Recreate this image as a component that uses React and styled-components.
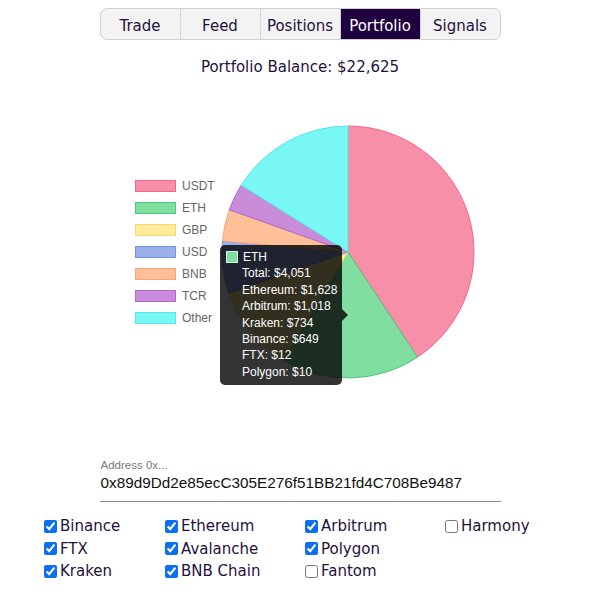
import styled, { createGlobalStyle } from "styled-components"

const GlobalStyle = createGlobalStyle`
  body {
    margin: 0;
    background: #fff;
    font-family: "DejaVu Sans", Verdana, sans-serif;
    color: #1f1140;
  }
`

const tabs = ["Trade", "Feed", "Positions", "Portfolio", "Signals"]

const slices = [
  { label: "USDT", value: 9210, fill: "#f88fa8", stroke: "#f3668a" },
  { label: "ETH", value: 4051, fill: "#80dea0", stroke: "#4fc47c" },
  { label: "GBP", value: 2514, fill: "#ffeb99", stroke: "#f5d870" },
  { label: "USD", value: 1508, fill: "#9aaeea", stroke: "#7a92e0" },
  { label: "BNB", value: 918, fill: "#ffbf99", stroke: "#f9a476" },
  { label: "TCR", value: 779, fill: "#c98cd9", stroke: "#b465cb" },
  { label: "Other", value: 3645, fill: "#79f7f5", stroke: "#52e9ea" },
]

const tooltipLines = [
  "Total: $4,051",
  "Ethereum: $1,628",
  "Arbitrum: $1,018",
  "Kraken: $734",
  "Binance: $649",
  "FTX: $12",
  "Polygon: $10",
]

const chains = [
  { name: "Binance", on: true },
  { name: "FTX", on: true },
  { name: "Kraken", on: true },
  { name: "Ethereum", on: true },
  { name: "Avalanche", on: true },
  { name: "BNB Chain", on: true },
  { name: "Arbitrum", on: true },
  { name: "Polygon", on: true },
  { name: "Fantom", on: false },
  { name: "Harmony", on: false },
]

const Page = styled.div`
  width: 600px;
  padding-top: 8px;
`

const TabBar = styled.div`
  display: flex;
  width: 401px;
  height: 32px;
  box-sizing: border-box;
  margin: 0 auto;
  border: 1px solid #cfcfcf;
  border-radius: 7px;
  overflow: hidden;
  background: #f3f3f3;
`

const Tab = styled.div`
  flex: 1;
  display: flex;
  align-items: center;
  justify-content: center;
  padding-top: 3px;
  font-size: 15px;
  background: ${p => (p.$active ? "#1f0040" : "transparent")};
  color: ${p => (p.$active ? "#fff" : "#1f1140")};
  border-left: ${p => (p.$first ? "none" : "1px solid #d4d4d4")};
`

const Balance = styled.div`
  margin-top: 18px;
  text-align: center;
  font-size: 15px;
  line-height: 18px;
`

const ChartWrap = styled.div`
  position: relative;
  height: 312px;
  margin-top: 20px;
  padding-left: 135px;
  display: flex;
  align-items: center;
`

const Legend = styled.div`
  width: 85px;
  display: flex;
  flex-direction: column;
`

const LegendItem = styled.div`
  display: flex;
  align-items: center;
  gap: 6px;
  height: 22px;
  font-family: "Liberation Sans", Arial, sans-serif;
  font-size: 12px;
  color: #666;
`

const Swatch = styled.span`
  width: 41px;
  height: 12px;
  box-sizing: border-box;
  background: ${p => p.$fill};
  border: 1px solid ${p => p.$stroke};
`

const Tooltip = styled.div`
  position: absolute;
  left: 220px;
  top: 149px;
  width: 122px;
  box-sizing: border-box;
  padding: 4px 6px 5px 6px;
  background: rgba(0, 0, 0, 0.8);
  border-radius: 5px;
  font-family: "Liberation Sans", Arial, sans-serif;
  font-size: 12px;
  line-height: 16.4px;
  color: #fff;
  white-space: nowrap;

  &::after {
    content: "";
    position: absolute;
    right: -6px;
    top: 50%;
    margin-top: -6px;
    border-style: solid;
    border-width: 6px 0 6px 6px;
    border-color: transparent transparent transparent rgba(0, 0, 0, 0.8);
  }
`

const TooltipTitle = styled.div`
  display: flex;
  align-items: center;
  gap: 5px;
`

const TooltipBox = styled.span`
  width: 12px;
  height: 12px;
  box-sizing: border-box;
  background: #80dea0;
  border: 1px solid #d8f5e2;
`

const TooltipLine = styled.div`
  padding-left: 16px;
`

const AddressField = styled.div`
  width: 401px;
  margin: 50px auto 0;
  font-family: "Liberation Sans", Arial, sans-serif;
`

const FieldLabel = styled.div`
  font-size: 11.5px;
  line-height: 14px;
  color: #7a7a7a;
  padding-left: 1px;
`

const FieldValue = styled.div`
  font-size: 15.3px;
  line-height: 20px;
  color: #111;
  padding: 1px 0 8px 1px;
  border-bottom: 1px solid #8a8a8a;
`

const ChainGrid = styled.div`
  display: grid;
  grid-template-columns: 121px 140px 140px auto;
  grid-template-rows: repeat(3, 22.5px);
  grid-auto-flow: column;
  margin-top: 13px;
  padding-left: 44px;
`

const ChainItem = styled.label`
  display: flex;
  align-items: center;
  font-size: 15px;
  color: #1f1140;

  input {
    width: 13px;
    height: 13px;
    margin: 0 3px 0 0;
    accent-color: #0b6ff0;
  }
`

const polar = (cx, cy, r, deg) => {
  const a = (deg * Math.PI) / 180
  return [cx + r * Math.cos(a), cy + r * Math.sin(a)]
}

const PieChart = () => {
  const total = slices.reduce((s, d) => s + d.value, 0)
  const cx = 128
  const cy = 128
  const r = 126
  let start = -90
  return (
    <svg width="256" height="256" viewBox="0 0 256 256">
      {slices.map(s => {
        const sweep = (s.value / total) * 360
        const end = start + sweep
        const [x1, y1] = polar(cx, cy, r, start)
        const [x2, y2] = polar(cx, cy, r, end)
        const large = sweep > 180 ? 1 : 0
        const d = `M${cx},${cy} L${x1},${y1} A${r},${r} 0 ${large} 1 ${x2},${y2} Z`
        start = end
        return <path key={s.label} d={d} fill={s.fill} stroke={s.stroke} strokeWidth="1" strokeLinejoin="round" />
      })}
    </svg>
  )
}

const App = () => {
  return (
    <Page>
      <GlobalStyle />
      <TabBar>
        {tabs.map((t, i) => (
          <Tab key={t} $first={i === 0} $active={t === "Portfolio"}>
            {t}
          </Tab>
        ))}
      </TabBar>

      <Balance>Portfolio Balance: $22,625</Balance>

      <ChartWrap>
        <Legend>
          {slices.map(s => (
            <LegendItem key={s.label}>
              <Swatch $fill={s.fill} $stroke={s.stroke} />
              {s.label}
            </LegendItem>
          ))}
        </Legend>
        <PieChart />
        <Tooltip>
          <TooltipTitle>
            <TooltipBox />
            ETH
          </TooltipTitle>
          {tooltipLines.map(l => (
            <TooltipLine key={l}>{l}</TooltipLine>
          ))}
        </Tooltip>
      </ChartWrap>

      <AddressField>
        <FieldLabel>Address 0x...</FieldLabel>
        <FieldValue>0x89d9Dd2e85ecC305E276f51BB21fd4C708Be9487</FieldValue>
      </AddressField>

      <ChainGrid>
        {chains.map(c => (
          <ChainItem key={c.name}>
            <input type="checkbox" defaultChecked={c.on} />
            {c.name}
          </ChainItem>
        ))}
      </ChainGrid>
    </Page>
  )
}

export default App
